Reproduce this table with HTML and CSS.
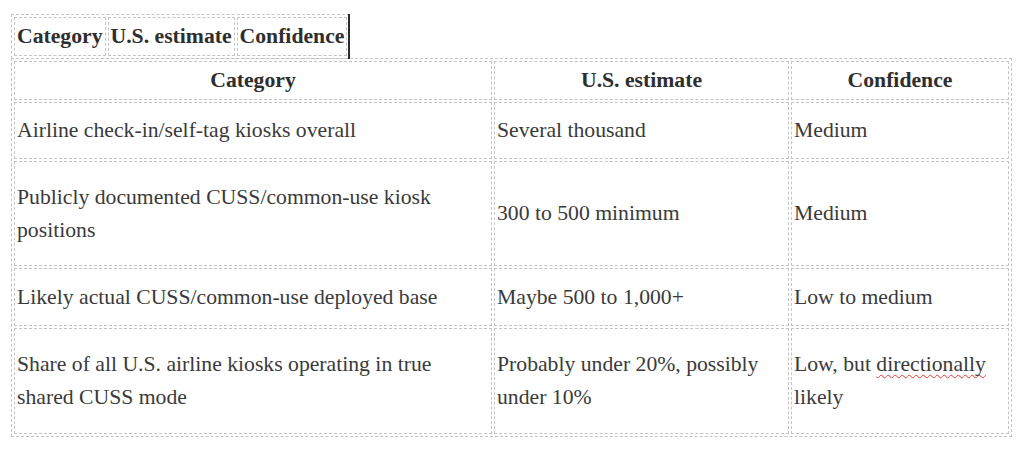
FILE: index.html
```html
<!DOCTYPE html>
<html lang="en">
<head>
<meta charset="utf-8">
<title>Table</title>
<link rel="stylesheet" href="styles.css">
</head>
<body>
<div class="page">
  <div class="top-row">
    <table class="mini">
      <tr>
        <th>Category</th>
        <th>U.S. estimate</th>
        <th>Confidence</th>
      </tr>
    </table>
    <span class="caret"></span>
  </div>
  <table class="data">
    <colgroup>
      <col class="c1">
      <col class="c2">
      <col class="c3">
    </colgroup>
    <thead>
      <tr class="head">
        <th>Category</th>
        <th>U.S. estimate</th>
        <th>Confidence</th>
      </tr>
    </thead>
    <tbody>
      <tr class="one">
        <td>Airline check-in/self-tag kiosks overall</td>
        <td>Several thousand</td>
        <td>Medium</td>
      </tr>
      <tr class="two first-two">
        <td>Publicly documented CUSS/common-use kiosk positions</td>
        <td>300 to 500 minimum</td>
        <td>Medium</td>
      </tr>
      <tr class="one">
        <td>Likely actual CUSS/common-use deployed base</td>
        <td>Maybe 500 to 1,000+</td>
        <td>Low to medium</td>
      </tr>
      <tr class="two">
        <td>Share of all U.S. airline kiosks operating in true shared CUSS mode</td>
        <td>Probably under 20%, possibly under 10%</td>
        <td>Low, but <span class="spell">directionally</span> likely</td>
      </tr>
    </tbody>
  </table>
</div>
</body>
</html>
```

FILE: styles.css
```css
html, body {
  margin: 0;
  padding: 0;
  background: #ffffff;
}

.page {
  padding: 14px 0 0 11px;
  font-family: "Liberation Serif", "Times New Roman", serif;
  font-size: 21.7px;
  line-height: 33px;
  color: #3a3a3a;
}

.top-row {
  display: flex;
  align-items: stretch;
}

table {
  border-collapse: separate;
  border-spacing: 2px;
  border: 1px dashed #c4c4c4;
}

th, td {
  border: 1px dashed #c4c4c4;
  padding: 2px 2px;
  text-align: left;
  vertical-align: middle;
}

th {
  font-weight: bold;
  color: #2e2e2e;
}

.caret {
  display: block;
  width: 2px;
  margin-left: -2px;
  background: #2a2a2a;
}

.data {
  width: 1001px;
  table-layout: fixed;
  margin-top: -1px;
}

.data col.c1 { width: 478px; }
.data col.c2 { width: 295px; }
.data col.c3 { width: 218px; }

.data th {
  text-align: center;
  box-sizing: border-box;
  height: 38px;
}

.data tr.one td {
  box-sizing: border-box;
  height: 58px;
}

.data tr.one:first-child td {
  height: 57px;
}

.data tr.two td {
  box-sizing: border-box;
  height: 106px;
}

.data tr.first-two td {
  height: 105px;
}

.spell {
  text-decoration: underline wavy #e53935;
  text-decoration-thickness: 1px;
  text-underline-offset: 3px;
  text-decoration-skip-ink: none;
}
```
